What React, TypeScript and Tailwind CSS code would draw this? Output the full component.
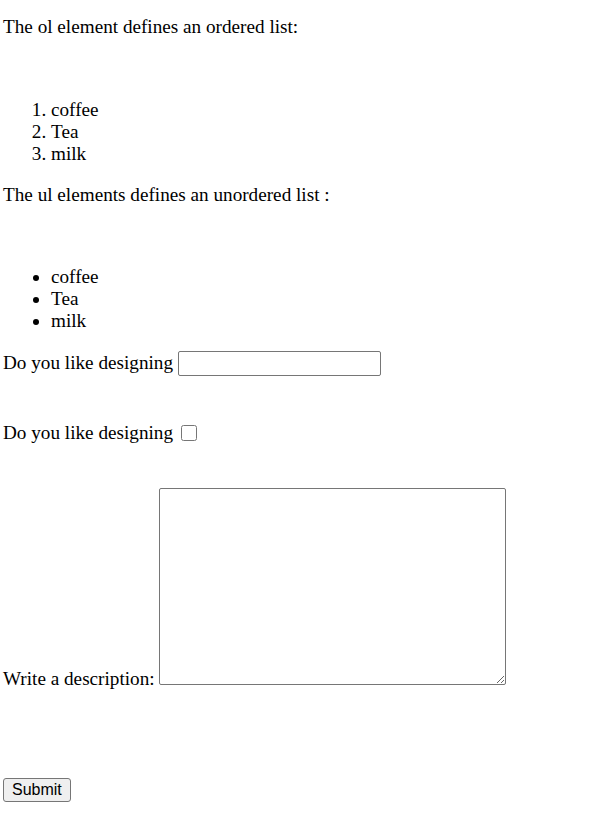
import React from "react"

export default function App() {
  return (
    <div className="min-h-[826px] bg-white px-[3px] text-[19.2px] leading-[22px] text-black [font-family:'Liberation_Serif','Times_New_Roman',serif]">
      <p className="pt-[16px]">The ol element defines an ordered list:</p>

      <ol className="mt-[61px] list-decimal pl-[48px]">
        <li>coffee</li>
        <li>Tea</li>
        <li>milk</li>
      </ol>

      <p className="mt-[19px]">The ul elements defines an unordered list :</p>

      <ul className="mt-[60px] list-disc pl-[48px]">
        <li>coffee</li>
        <li>Tea</li>
        <li>milk</li>
      </ul>

      <form onSubmit={(e) => e.preventDefault()}>
        <div className="mt-[19px] flex items-center">
          <label htmlFor="design" className="mt-[-2px]">Do you like designing</label>
          <input
            id="design"
            type="text"
            className="ml-[5px] h-[25px] w-[203px] rounded-[2px] border border-[#767676] bg-white px-[2px]"
          />
        </div>

        <div className="mt-[46px] flex items-center">
          <label htmlFor="likes">Do you like designing</label>
          <input id="likes" type="checkbox" className="ml-[8px] h-[16px] w-[16px]" />
        </div>

        <div className="mt-[44px] flex items-end">
          <label htmlFor="desc" className="mb-[-5px]">
            Write a description:
          </label>
          <textarea
            id="desc"
            className="ml-[4px] h-[197px] w-[347px] rounded-[2px] border border-[#767676] bg-white"
          />
        </div>

        <button
          type="submit"
          className="mt-[93px] h-[24px] rounded-[3px] border border-[#767676] bg-[#efefef] px-[8px] text-[16px] leading-[20px] [font-family:'Liberation_Sans',Arial,sans-serif]"
        >
          Submit
        </button>
      </form>
    </div>
  )
}
